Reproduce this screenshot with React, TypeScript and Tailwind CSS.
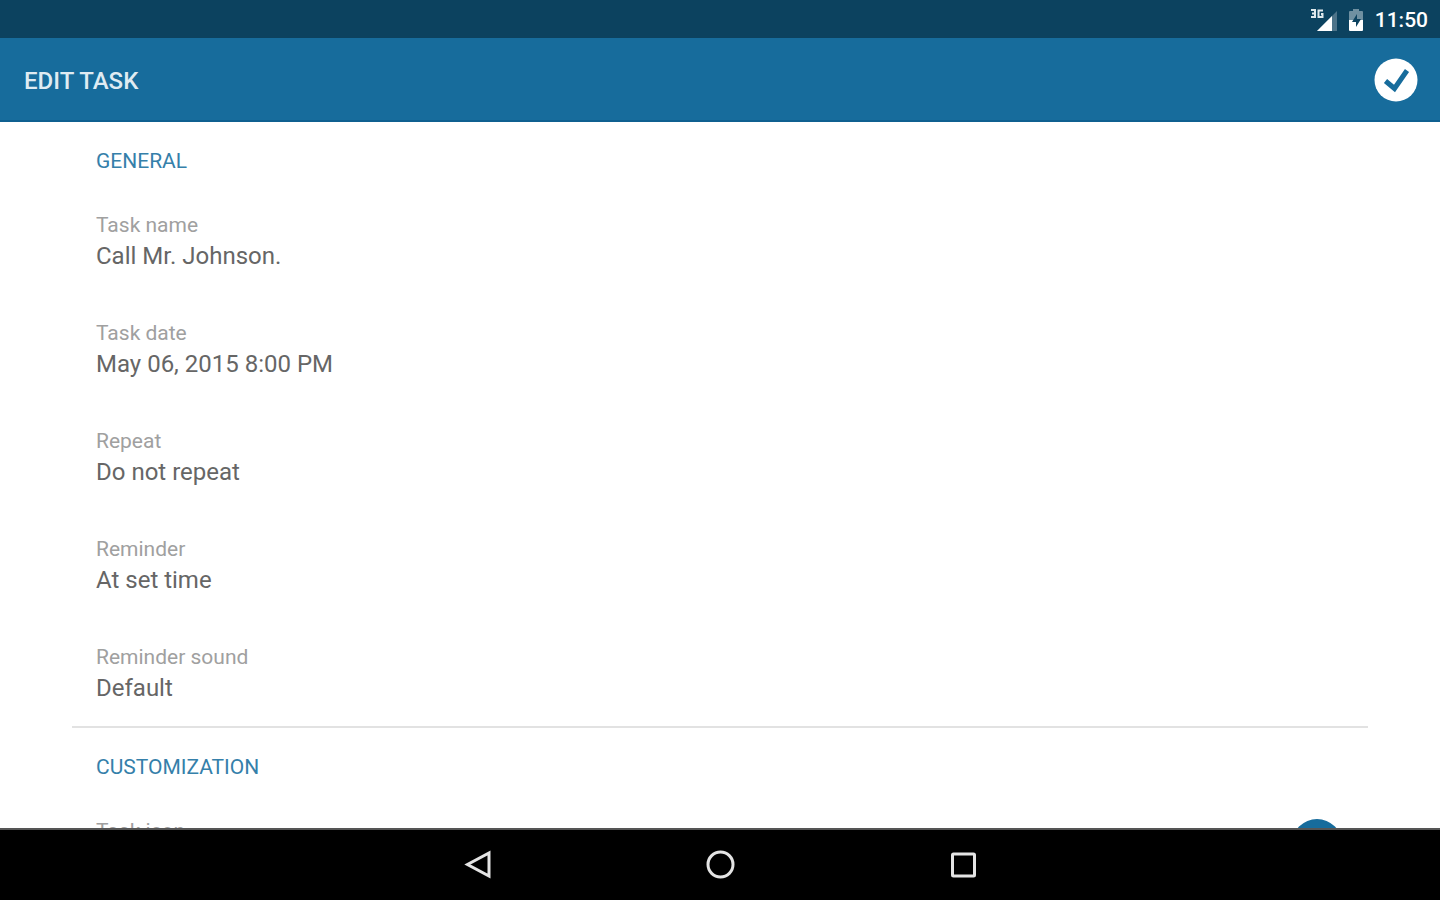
import React from 'react';

interface Preference {
  label: string;
  value: string;
}

const generalPreferences: Preference[] = [
  { label: 'Task name', value: 'Call Mr. Johnson.' },
  { label: 'Task date', value: 'May 06, 2015 8:00 PM' },
  { label: 'Repeat', value: 'Do not repeat' },
  { label: 'Reminder', value: 'At set time' },
  { label: 'Reminder sound', value: 'Default' },
];

const StatusBar: React.FC = () => (
  <div className="flex h-[38px] shrink-0 items-center justify-end bg-[#0c425f] pr-3 pt-[2px] text-white">
    <svg className="mr-3 h-6 w-7" viewBox="0 0 28 24" aria-label="3G signal">
      <path d="M28 3v20H8z" fill="#4d7389" />
      <path d="M23 8v15H8z" fill="#fff" />
      <g fill="none" stroke="#dfe8ec" strokeWidth="2">
        <path d="M2 2h4v7H2M3 5.500h3" />
        <path d="M14 2.500H9.500V9h4V6H12" />
      </g>
    </svg>
    <svg className="mr-3 h-6 w-[14px]" viewBox="0 0 14 24" aria-label="Battery charging">
      <path d="M4 1h6v2h3q1 0 1 1v9H0V4q0-1 1-1h3z" fill="#6f90a1" />
      <path d="M0 12h14v10q0 1-1 1H1q-1 0-1-1z" fill="#fff" />
      <path d="M8 6 3 14h4v5l5-8H8z" fill="#0c425f" />
    </svg>
    <time className="text-[21px] font-medium leading-6">11:50</time>
  </div>
);

const AppBar: React.FC = () => (
  <header className="flex h-[84px] shrink-0 items-center justify-between border-b-2 border-[#0f6090] bg-[#176c9c] px-6 pt-[2px]">
    <h1 className="pt-[2px] text-2xl font-medium text-[#dfebf2]">EDIT TASK</h1>
    <button type="button" aria-label="Save task" className="-mr-[2px]">
      <svg className="h-11 w-11" viewBox="0 0 44 44">
        <circle cx="22" cy="22" r="21.500" fill="#fff" />
        <path d="M11.500 23 20.500 30.500 33 12.500" fill="none" stroke="#176c9c" strokeWidth="5" />
      </svg>
    </button>
  </header>
);

const SectionTitle: React.FC<{ children: React.ReactNode }> = ({ children }) => (
  <h2 className="flex h-[78px] items-center px-6 pt-[2px] text-[21px] text-[#3580aa]">{children}</h2>
);

const NavigationBar: React.FC = () => (
  <nav className="flex h-[72px] shrink-0 justify-center border-t-2 border-[#555555] bg-black">
    <button type="button" aria-label="Back" className="flex w-[243px] items-center justify-center">
      <svg className="h-8 w-8" viewBox="0 0 32 32" fill="none" stroke="#e4e4e4" strokeWidth="3">
        <path d="M28 4v23L6.500 15.500z" />
      </svg>
    </button>
    <button type="button" aria-label="Home" className="flex w-[243px] items-center justify-center">
      <svg className="h-8 w-8" viewBox="0 0 32 32" fill="none" stroke="#e4e4e4" strokeWidth="3">
        <circle cx="16.500" cy="15.500" r="12.500" />
      </svg>
    </button>
    <button type="button" aria-label="Recent apps" className="flex w-[243px] items-center justify-center">
      <svg className="h-8 w-8" viewBox="0 0 32 32" fill="none" stroke="#e4e4e4" strokeWidth="3">
        <rect x="5.500" y="5" width="22" height="22" rx="1" />
      </svg>
    </button>
  </nav>
);

export default function App() {
  return (
    <div className="flex h-screen flex-col overflow-hidden bg-white font-['Roboto',sans-serif]">
      <StatusBar />
      <AppBar />
      <main className="min-h-0 flex-1 overflow-hidden px-[72px]">
        <section className="border-b-2 border-[#e2e2e2]">
          <SectionTitle>GENERAL</SectionTitle>
          <div className="flex flex-col gap-[46px] px-6 pb-[22px] pt-[10px]">
            {generalPreferences.map((item) => (
              <button key={item.label} type="button" className="text-left">
                <span className="block text-[21px] leading-[30px] text-[#a0a0a0]">{item.label}</span>
                <span className="block text-2xl text-[#666666]">{item.value}</span>
              </button>
            ))}
          </div>
        </section>
        <section>
          <SectionTitle>CUSTOMIZATION</SectionTitle>
          <button type="button" className="flex w-full items-start justify-between px-6 pt-[10px] text-left">
            <span className="text-[21px] leading-[30px] text-[#a0a0a0]">Task icon</span>
            <span className="mr-[2px] mt-[3px] h-[50px] w-[50px] rounded-full bg-[#176c9c]" />
          </button>
        </section>
      </main>
      <NavigationBar />
    </div>
  );
}
